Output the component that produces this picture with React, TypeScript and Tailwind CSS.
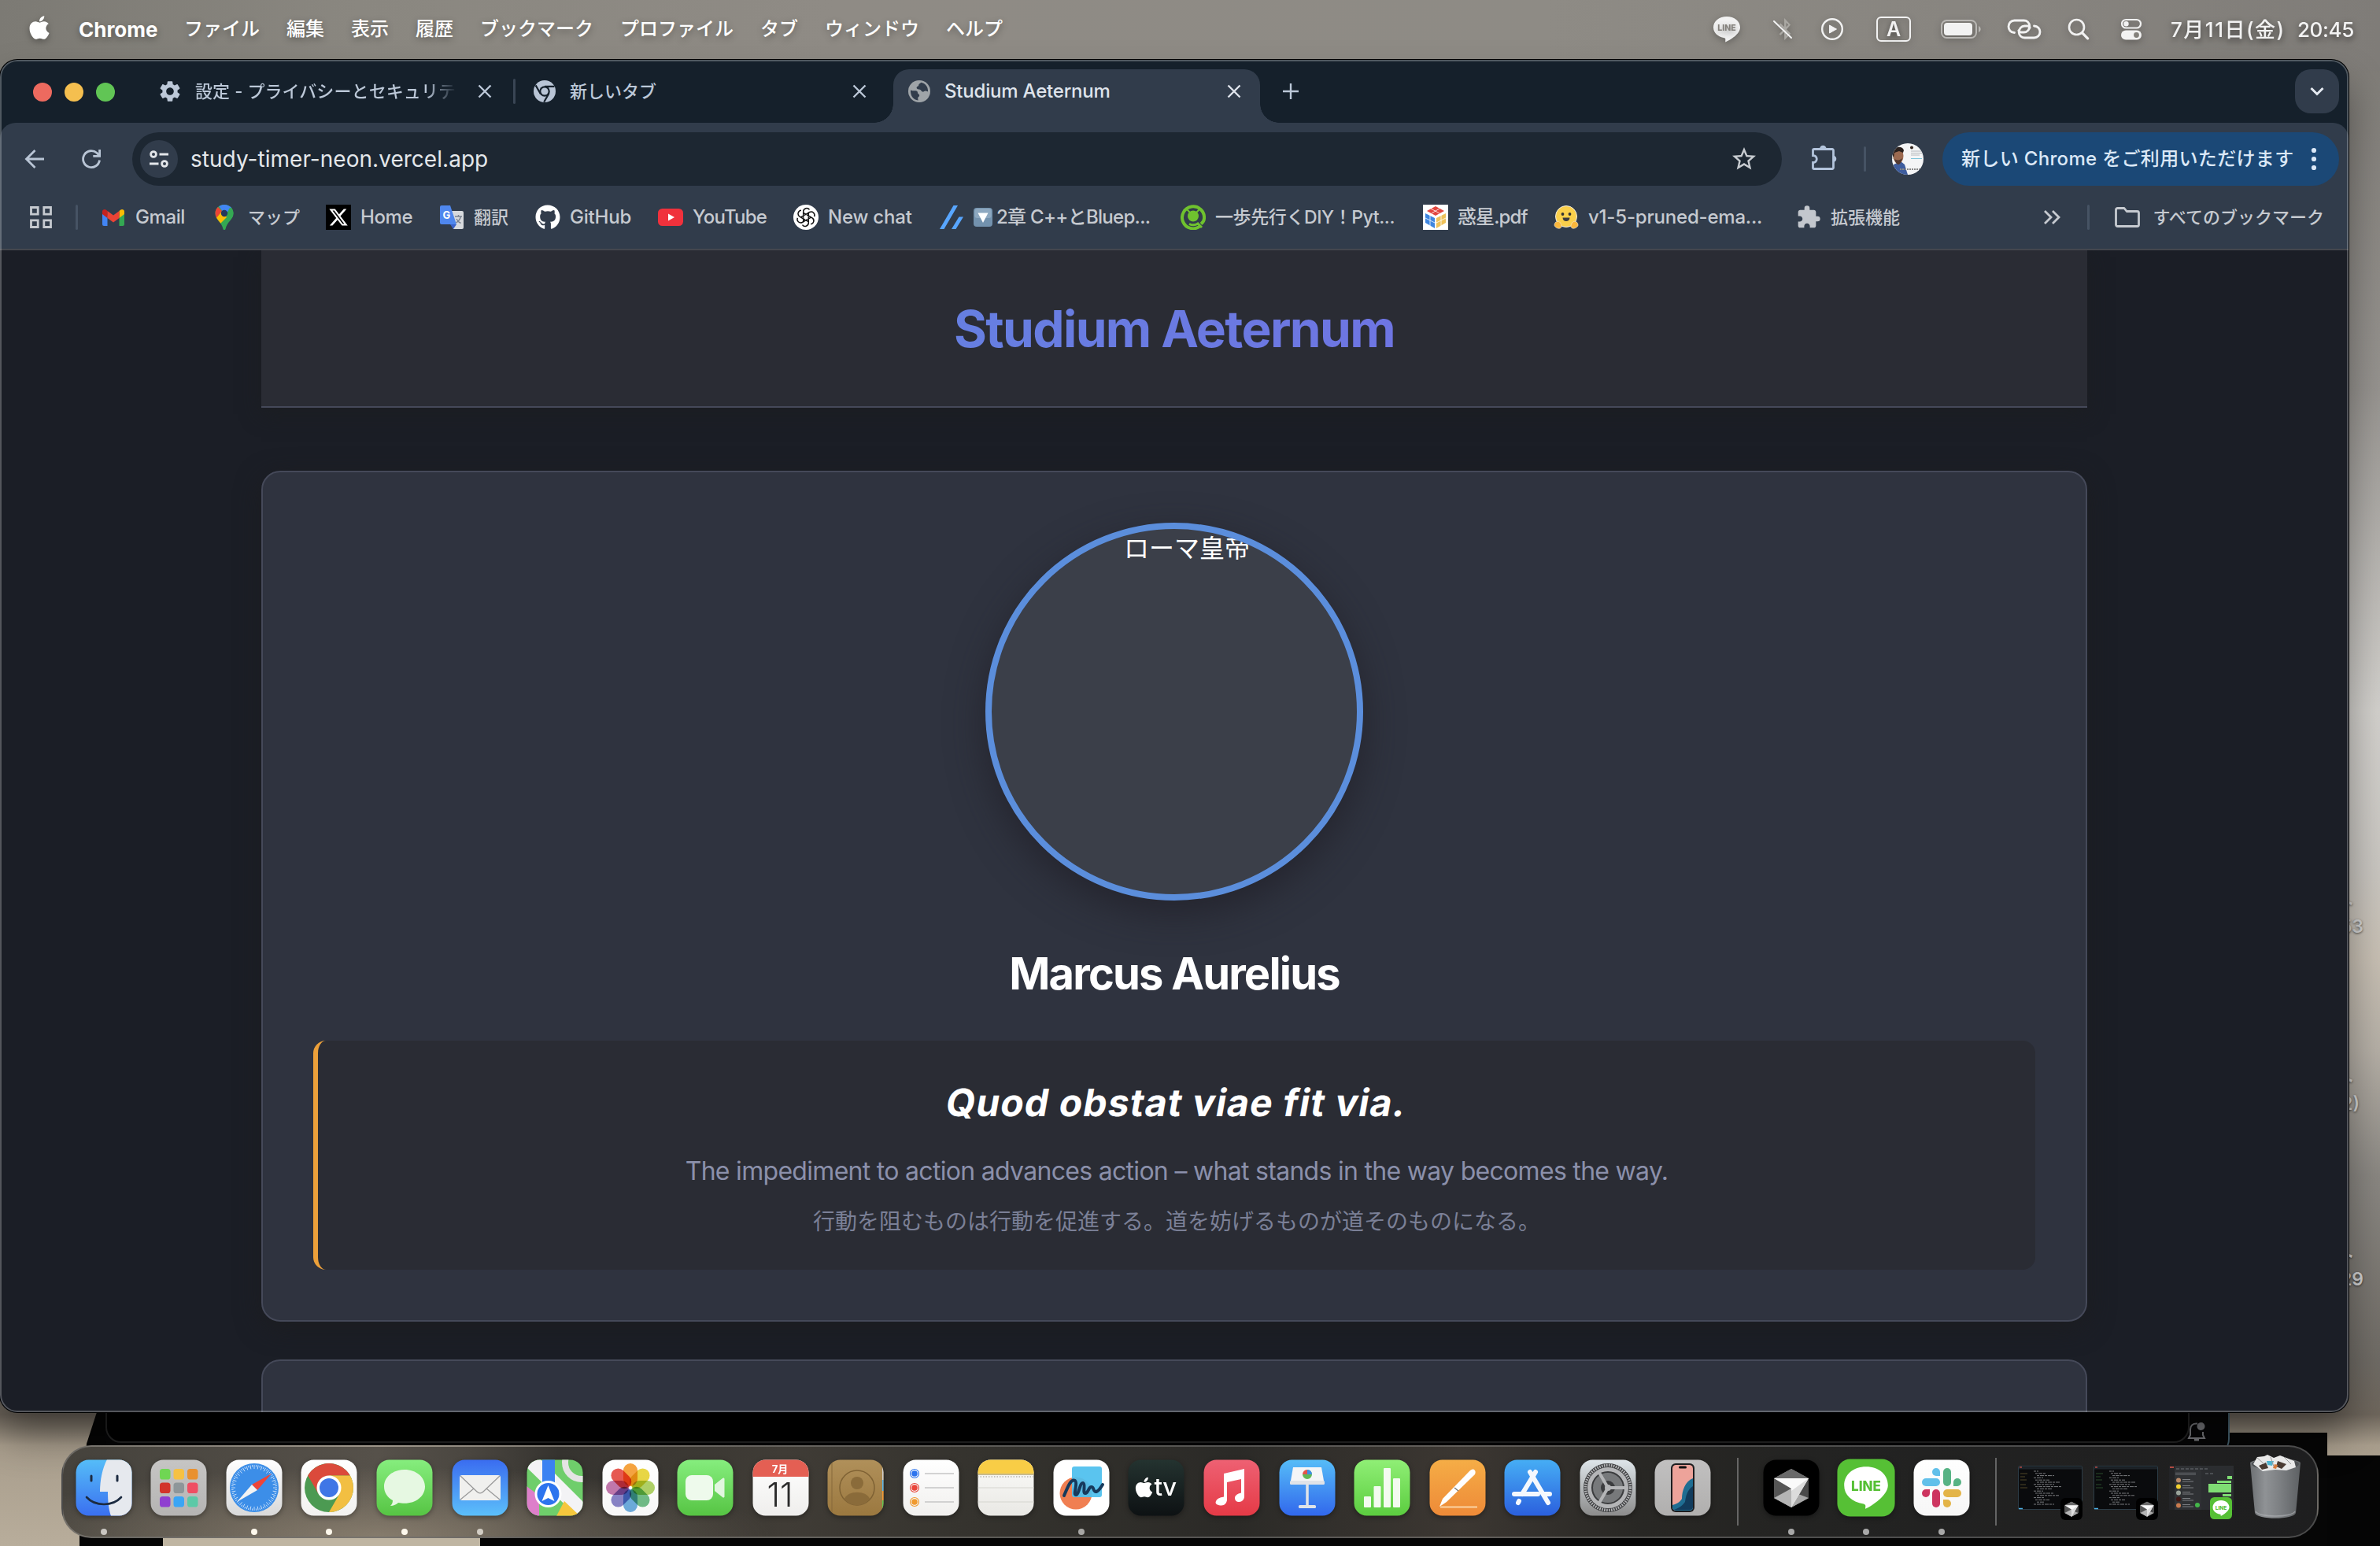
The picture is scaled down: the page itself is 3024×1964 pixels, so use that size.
import React from "react";
import { FaApple, FaGithub, FaXTwitter, FaBluetoothB } from "react-icons/fa6";
import { MdSettings, MdExtension, MdStarOutline } from "react-icons/md";

type Node = React.ReactNode;

/* ---------- small line icons ---------- */

const Close = ({ className = "" }: { className?: string }) => (
  <svg viewBox="0 0 24 24" className={"size-6 shrink-0 " + className} stroke="currentColor" strokeWidth="2.4" fill="none">
    <path d="M4.5 4.5l15 15M19.5 4.5l-15 15" />
  </svg>
);

const ChromeMono = () => (
  <svg viewBox="0 0 28 28" className="size-7 shrink-0">
    <circle cx="14" cy="14" r="14" fill="#b9c5d6" />
    <circle cx="14" cy="14" r="6.8" fill="#15202b" />
    <circle cx="14" cy="14" r="4.6" fill="#b9c5d6" />
    <path d="M14 7.9H26.4M8.7 17L2.6 6.4M19.3 17L13.2 27.6" stroke="#15202b" strokeWidth="2.2" />
  </svg>
);

const Globe = () => (
  <svg viewBox="0 0 28 28" className="size-7 shrink-0">
    <circle cx="14" cy="14" r="14" fill="#9fa4a8" />
    <path
      d="M3 12.5c2 .8 4 1 5.8.8 2.2-.2 3.2.8 3.2 2.4 0 1.8 2 1.6 2.2 3.4.2 2-2.2 2-2 4 .1 1.2.6 2.2.3 2.5C6.5 24.8 2.6 19.8 3 12.5zM16 2.8c-.5 1.6-2.8 1.4-2.8 3.4 0 1.6-2.6 1.4-2.6 3.4 0 1.8 2.4 2 4.2 2.2 1.6.2 1.4 2.4 3.4 2.8 1.8.4 2.6-1.8 4.4-1 1 .5 1.6.8 2.5.6C25.2 8 21.5 3.6 16 2.8z"
      fill="#313c4b"
    />
  </svg>
);

/* ---------- menu bar ---------- */

const MENUS = ["ファイル", "編集", "表示", "履歴", "ブックマーク", "プロファイル", "タブ", "ウィンドウ", "ヘルプ"];

function MenuBar() {
  return (
    <div className="flex h-[74px] items-center text-[24px] font-medium text-white [text-shadow:0_3px_8px_rgba(0,0,0,0.35)]">
      <FaApple className="ml-[33px] mb-1 size-[34px] drop-shadow-[0_3px_4px_rgba(0,0,0,0.3)]" />
      <span className="ml-[33px] w-[102px] text-[26px] font-bold">Chrome</span>
      <div className="ml-8 flex gap-[34px]">
        {MENUS.map((m) => (
          <span key={m} className="whitespace-nowrap">{m}</span>
        ))}
      </div>
      <div className="ml-auto mr-8 flex items-center text-[#f2f2f2] drop-shadow-[0_3px_4px_rgba(0,0,0,0.25)]">
        <svg viewBox="0 0 36 34" className="h-[34px] w-9">
          <path d="M18 1C8.3 1 1 7 1 14.8c0 6.8 5.4 11.900 14 13.400 1.600.3 1.400 1.300 1.200 5.300 6-2.600 18.800-10 18.800-18.700C35 7 27.700 1 18 1z" fill="#f2f2f2" />
          <text x="18" y="18.8" textAnchor="middle" fontSize="10.5" fontWeight="800" fill="#84817c" fontFamily="Inter">LINE</text>
        </svg>
        <div className="relative ml-[40px] size-7">
          <FaBluetoothB className="absolute left-0.5 top-0 size-7 text-[#aaa8a3]" />
          <svg viewBox="0 0 28 28" className="absolute inset-0 size-7" stroke="#f2f2f2" strokeWidth="2" strokeLinecap="round">
            <path d="M2 4l22 21" />
          </svg>
        </div>
        <svg viewBox="0 0 30 30" className="ml-[33px] size-[30px]" fill="none" stroke="#f2f2f2" strokeWidth="2.4">
          <circle cx="15" cy="15" r="12.8" />
          <path d="M11.500 10v10l9-5z" fill="#f2f2f2" strokeWidth="1" strokeLinejoin="round" />
        </svg>
        <div className="ml-[41px] flex h-8 w-11 items-center justify-center rounded-[6px] border-2 border-[#f2f2f2] text-[25px] leading-none font-semibold">A</div>
        <svg viewBox="0 0 52 24" className="ml-[38px] h-6 w-[52px]">
          <rect x="1" y="1" width="44" height="22" rx="6.5" fill="none" stroke="#b9b7b4" strokeWidth="2" />
          <rect x="4" y="4" width="36" height="16" rx="4" fill="#f2f2f2" />
          <path d="M48 8c3.500 1.500 3.500 6.500 0 8z" fill="#b9b7b4" />
        </svg>
        <svg viewBox="0 0 44 26" className="ml-8 h-[26px] w-11" fill="none" stroke="#f2f2f2" strokeWidth="2.8" strokeLinecap="round">
          <path d="M9.500 17.500C5 17.500 2 14 2 9.800 2 5.500 5.200 2 9.500 2h12c4 0 7 3 7.300 7 .2 4.200-2.800 8-7.300 8h-3.300c-1.800 0-3-1-3.400-2.200" />
          <path d="M34.500 9c4.500 0 7.500 3.500 7.500 7.500 0 4.200-3.200 7.500-7.500 7.500h-12c-4 0-7.300-3-7.300-7 0-4.500 3-8 7.300-8h3.300c1.800 0 3 1 3.400 2.200" />
        </svg>
        <svg viewBox="0 0 28 28" className="ml-[33px] size-7" fill="none" stroke="#f2f2f2" strokeWidth="2.6" strokeLinecap="round">
          <circle cx="11.5" cy="11.5" r="9.5" />
          <path d="M18.800 18.800l6.800 7" strokeWidth="3.2" />
        </svg>
        <svg viewBox="0 0 28 28" className="ml-[39px] size-7">
          <rect x="2" y="2" width="24" height="10.5" rx="5.25" fill="none" stroke="#f2f2f2" strokeWidth="2.2" />
          <circle cx="7.5" cy="7.2" r="3.2" fill="#f2f2f2" />
          <rect x="1" y="15.5" width="26" height="12" rx="6" fill="#f2f2f2" />
          <circle cx="20.5" cy="21.5" r="3.4" fill="#84817c" />
        </svg>
        <span className="ml-[36px] w-[161px] whitespace-nowrap text-[26px] tracking-[1.5px]">7月11日(金)</span>
        <span className="w-[73px] whitespace-nowrap text-[26px] tracking-[-0.4px]">20:45</span>
      </div>
    </div>
  );
}

/* ---------- browser chrome ---------- */

function TabStrip() {
  return (
    <div className="flex h-20 items-start pt-3 text-[24px] font-medium text-[#bcc8d8]">
      <div className="ml-[42px] flex h-[58px] items-center gap-4">
        <span className="size-6 rounded-full bg-[#ed6a5f]" />
        <span className="size-6 rounded-full bg-[#f5bf4f]" />
        <span className="size-6 rounded-full bg-[#61c555]" />
      </div>
      <div className="ml-[54px] flex h-14 items-center">
        <MdSettings className="size-8 shrink-0" />
        <span className="ml-[16px] w-[333px] bg-linear-to-r from-[#bcc8d8] from-88% to-[#15202b] to-100% bg-clip-text text-[22px] tracking-[0.1px] whitespace-nowrap text-transparent">
          設定 - プライバシーとセキュリテ
        </span>
        <Close className="ml-[23px]" />
      </div>
      <span className="ml-[24px] mt-3 h-8 w-[3px] rounded bg-[#394554]" />
      <div className="ml-[23px] flex h-14 w-[457px] items-center">
        <ChromeMono />
        <span className="ml-[18px] text-[22px]">新しいタブ</span>
        <Close className="ml-auto mr-[31px]" />
      </div>
      <div className="relative h-[68px] w-[466px] rounded-t-[20px] bg-[#313c4b] before:absolute before:bottom-0 before:-left-6 before:size-6 before:bg-[radial-gradient(circle_at_0_0,transparent_23.5px,#313c4b_24px)] after:absolute after:-right-6 after:bottom-0 after:size-6 after:bg-[radial-gradient(circle_at_100%_0,transparent_23.5px,#313c4b_24px)]">
        <div className="flex h-14 items-center pl-[19px] text-[#dfe4ec]">
          <Globe />
          <span className="ml-[18px] tracking-[-0.2px]">Studium Aeternum</span>
          <Close className="mr-[21px] ml-auto" />
        </div>
      </div>
      <div className="ml-[27px] flex h-14 items-center">
        <svg viewBox="0 0 24 24" className="size-6" stroke="currentColor" strokeWidth="2.4">
          <path d="M12 2v20M2 12h20" />
        </svg>
      </div>
      <div className="mr-3 ml-auto flex size-14 items-center justify-center rounded-[20px] bg-[#313c4b]">
        <svg viewBox="0 0 24 24" className="size-6" fill="none" stroke="#e6ebf2" strokeWidth="3">
          <path d="M4.500 8l7.500 7.500L19.500 8" />
        </svg>
      </div>
    </div>
  );
}

function Avatar() {
  return (
    <svg viewBox="0 0 40 40" className="size-10 shrink-0">
      <defs>
        <clipPath id="avatar">
          <circle cx="20" cy="20" r="20" />
        </clipPath>
      </defs>
      <g clipPath="url(#avatar)">
        <rect width="40" height="40" fill="#f4f5f6" />
        <rect width="8" height="20" fill="#cfcdc9" />
        <path d="M2 40V27l9-4 5 4 4 13z" fill="#3e5d9e" />
        <ellipse cx="8" cy="16" rx="6.5" ry="10" fill="#9c6a50" />
        <path d="M0 14C0 4 13 2 15 9l-1 3-5-2-6 2-1 6z" fill="#2a211e" />
        <path d="M3 20c3 2 7 2 10-1-1 5-3 8-5 8s-4-3-5-7z" fill="#543a30" />
        <circle cx="25" cy="5.5" r="2" fill="#33261f" />
        <path d="M24 10h13M24 12.500h14M24 15h11" stroke="#b5b8bc" />
        <path d="M24 19.500h14" stroke="#7cc4da" />
        <path d="M10 33h26" stroke="#888" strokeWidth="2" strokeDasharray="2 1" />
      </g>
    </svg>
  );
}

function Toolbar() {
  return (
    <div className="flex h-20 items-end text-[#b9c5d5]">
      <div className="flex h-[68px] w-full items-center">
        <svg viewBox="0 0 28 28" className="ml-[30px] size-7" fill="none" stroke="currentColor" strokeWidth="2.8">
          <path d="M26 14H4M14.500 3L3.500 14l11 11" />
        </svg>
        <svg viewBox="0 0 28 28" className="ml-[44px] size-7" fill="none" stroke="currentColor" strokeWidth="2.8">
          <path d="M24.500 15.500A10.500 10.500 0 1 1 21 6.200l3.500 3.500" />
          <path d="M24.600 2v8.300h-8.300" />
        </svg>
        <div className="ml-[38px] flex h-[68px] w-[2096px] items-center rounded-full bg-[#1d2732] pr-[30px] pl-[10px]">
          <div className="flex size-12 items-center justify-center rounded-full bg-[#313c4b]">
            <svg viewBox="0 0 28 28" className="size-7" fill="none" stroke="#e3e6ea" strokeWidth="2.8">
              <circle cx="7" cy="8" r="3.4" />
              <path d="M14.500 8H26M2 20h11.500" />
              <circle cx="21" cy="20" r="3.4" />
            </svg>
          </div>
          <span className="ml-4 text-[28px] tracking-[0.03px] text-[#e4e7eb]">study-timer-neon.vercel.app</span>
          <MdStarOutline className="ml-auto size-9 text-[#c8ccd1]" />
        </div>
        <svg viewBox="0 0 34 34" className="ml-[36px] size-[34px] shrink-0 -translate-y-0.5">
          <path
            d="M5 6.500h23A1.500 1.500 0 0 1 29.500 8v22a1.500 1.500 0 0 1-1.500 1.500H5A1.500 1.500 0 0 1 3.500 30v-6.500c3 0 4.800-2 4.800-4.500s-1.800-4.500-4.800-4.500V8A1.500 1.500 0 0 1 5 6.500z"
            fill="none" stroke="#b3c4dc" strokeWidth="2.8"
          />
          <path d="M12 6a4.300 4.300 0 0 1 8.600 0zM29 14.500a4.300 4.300 0 0 1 0 8.600z" fill="#b3c4dc" />
        </svg>
        <span className="ml-[34px] h-8 w-[3px] rounded bg-[#465364]" />
        <div className="ml-[33px]"><Avatar /></div>
        <div className="ml-6 flex h-[68px] w-[504px] items-center rounded-full bg-[#1b4876] pl-6 text-[24px] font-medium text-[#dbe8f7]">
          <span className="w-[428px] whitespace-nowrap tracking-[0.33px]">新しい Chrome をご利用いただけます</span>
          <svg viewBox="0 0 8 30" className="ml-[16px] h-[30px] w-2" fill="#dbe8f7">
            <circle cx="4" cy="4" r="3.1" />
            <circle cx="4" cy="15" r="3.1" />
            <circle cx="4" cy="26" r="3.1" />
          </svg>
        </div>
      </div>
    </div>
  );
}

/* ---------- bookmarks ---------- */

const Gmail = () => (
  <svg viewBox="0 0 32 32" className="size-8">
    <path d="M2 8v17a2 2 0 0 0 2 2h4.500V14z" fill="#4285f4" />
    <path d="M30 8v17a2 2 0 0 1-2 2h-4.500V14z" fill="#34a853" />
    <path d="M2 8.500V12l6.500 5V8L7 6.700C5 5.200 2 6.300 2 8.500z" fill="#c5221f" />
    <path d="M30 8.500V12l-6.500 5V8L25 6.700c2-1.500 5-.4 5 1.800z" fill="#fbbc04" />
    <path d="M8.500 8v9l7.500 5.600 7.500-5.600V8L16 13.600z" fill="#ea4335" />
  </svg>
);
const MapsPin = () => (
  <svg viewBox="0 0 32 32" className="size-8 -translate-x-0.5">
    <defs>
      <clipPath id="pin">
        <path d="M16 0C9 0 4.500 5 4.500 11c0 8 8 10.500 10 20 .4 1.300 2.600 1.300 3 0 2-9.500 10-12 10-20C27.500 5 23 0 16 0z" />
      </clipPath>
    </defs>
    <g clipPath="url(#pin)">
      <rect width="32" height="32" fill="#34a853" />
      <path d="M8 0h24L16 12z" fill="#4285f4" />
      <path d="M22 5l10-5v10L14 30z" fill="#34a853" />
      <path d="M3 20l10-12 6 8L9 26z" fill="#fbbc04" />
      <path d="M0 4l8-1 5 5-8 10z" fill="#ea4335" />
    </g>
    <circle cx="16" cy="11" r="4.2" fill="#24375c" />
  </svg>
);
const Translate = () => (
  <svg viewBox="0 0 32 32" className="size-8">
    <path d="M12 8h17a2 2 0 0 1 2 2v19a2 2 0 0 1-2 2H18z" fill="#d7dade" />
    <path d="M14 25h8l-4 6z" fill="#3b62c8" />
    <path d="M3 1h11l8 24H3a2 2 0 0 1-2-2V3a2 2 0 0 1 2-2z" fill="#4f87ee" />
    <text x="9.5" y="18" textAnchor="middle" fontSize="13" fontWeight="700" fill="#fff" fontFamily="Inter">G</text>
    <path d="M20 15h9M24.500 13v2M27.500 15c-1 4-3.500 6.500-6 8M22 18c1 2.500 3.500 4.500 5.500 5.500" stroke="#7a8290" strokeWidth="1.4" fill="none" />
  </svg>
);
const XLogo = () => (
  <span className="flex size-8 items-center justify-center bg-black">
    <FaXTwitter className="size-[26px] text-white" />
  </span>
);
const YouTube = () => (
  <svg viewBox="0 0 32 32" className="size-8">
    <rect y="5" width="32" height="22" rx="5.5" fill="#f0313c" />
    <path d="M13 11.500v9l8-4.500z" fill="#fff" />
  </svg>
);
const Knot = () => (
  <svg viewBox="0 0 32 32" className="size-8">
    <circle cx="16" cy="16" r="16" fill="#fff" />
    <g fill="none" stroke="#111" strokeWidth="1.5">
      {[0, 60, 120, 180, 240, 300].map((a) => (
        <path key={a} d="M16 12.200l-3.300-1.900V8.700a4.300 4.300 0 0 1 7.800-2.300M12.700 10v6.800" transform={`rotate(${a} 16 16)`} />
      ))}
    </g>
  </svg>
);
const Zenn = () => (
  <svg viewBox="0 0 32 32" className="size-8" fill="#58a6ff">
    <path d="M1 31h5.500L24 1h-5.500zM16 31h5.500L31 15.500h-5.500z" />
  </svg>
);
const DownBadge = () => (
  <svg viewBox="0 0 24 24" className="mr-[5px] size-6">
    <rect width="24" height="24" rx="4" fill="#7392ae" />
    <rect x="1.5" y="1" width="21" height="12" rx="3" fill="#9fb7cc" opacity=".6" />
    <path d="M5.500 6.500h13L12 19z" fill="#fff" />
  </svg>
);
const Ring = () => (
  <svg viewBox="0 0 32 32" className="size-8">
    <path d="M24.500 27.500A14 14 0 1 1 30 17.500c0 3-1.500 5-4 7" fill="none" stroke="#6fc22e" strokeWidth="4" />
    <circle cx="16" cy="14.5" r="7" fill="#6fc22e" />
    <path d="M8.500 6.500l4 4M23.500 6.500l-4 4" stroke="#6fc22e" strokeWidth="2" />
    <path d="M11 24.500c4 2 8 1.500 11-.5l5 5" stroke="#6fc22e" strokeWidth="3" fill="none" />
  </svg>
);
const Cube = () => (
  <svg viewBox="0 0 32 32" className="size-8">
    <rect width="32" height="32" fill="#fff" />
    <path d="M16 2l11 6-11 6L5 8z" fill="#e2463f" />
    <path d="M3 11l12 6v13L3 23z" fill="#3f86e0" />
    <path d="M29 11l-12 6v13l12-7z" fill="#efc25a" />
    <path d="M10 5l11 6M21 5l-10 6M9 13v14M3 17l12 6M23 13v14M29 17l-12 6" stroke="#fff" strokeWidth="0.8" />
  </svg>
);
const Hug = () => (
  <svg viewBox="0 0 32 32" className="size-8">
    <circle cx="16" cy="15" r="13.5" fill="#fbd04b" stroke="#f3ede0" strokeWidth="1" />
    <circle cx="11.5" cy="12" r="1.9" fill="#333" />
    <circle cx="20.5" cy="12" r="1.9" fill="#333" />
    <path d="M11.500 16.500h9c0 6-9 6-9 0z" fill="#3b3a3f" />
    <path d="M3 22c3-2 5 0 6 2s2 5-1 6-7-2-7-4 1-3.500 2-4zM29 22c-3-2-5 0-6 2s-2 5 1 6 7-2 7-4-1-3.500-2-4z" fill="#fbb73c" stroke="#f3ede0" strokeWidth=".6" />
  </svg>
);

const BOOKMARKS: { icon: Node; label: Node; box: string; text: string }[] = [
  { icon: <Gmail />, label: "Gmail", box: "w-[143px]", text: "ml-3 tracking-[-0.4px]" },
  { icon: <MapsPin />, label: "マップ", box: "w-[143px]", text: "ml-[12px] text-[22px]" },
  { icon: <XLogo />, label: "Home", box: "w-[144px]", text: "ml-3 tracking-[-0.4px]" },
  { icon: <Translate />, label: "翻訳", box: "w-[122px]", text: "ml-3 text-[22px]" },
  { icon: <FaGithub className="size-8 text-white" />, label: "GitHub", box: "w-[156px]", text: "ml-3 tracking-[-0.2px]" },
  { icon: <YouTube />, label: "YouTube", box: "w-[172px]", text: "ml-3 tracking-[-0.8px]" },
  { icon: <Knot />, label: "New chat", box: "w-[185px]", text: "ml-3 tracking-[-0.2px]" },
  { icon: <Zenn />, label: <><DownBadge />2章 C++とBluep...</>, box: "w-[307px]", text: "ml-3 tracking-[-0.7px]" },
  { icon: <Ring />, label: "一歩先行くDIY！Pyt...", box: "w-[308px]", text: "ml-3 text-[23px] tracking-[-0.4px]" },
  { icon: <Cube />, label: "惑星.pdf", box: "w-[166px]", text: "ml-3 tracking-[-0.9px]" },
  { icon: <Hug />, label: "v1-5-pruned-ema...", box: "w-[308px]", text: "ml-3 tracking-[-0.2px]" },
  { icon: <MdExtension className="size-8 text-[#c3c7cd]" />, label: "拡張機能", box: "w-[140px]", text: "ml-3 text-[22px]" },
];

function BookmarksBar() {
  return (
    <div className="flex h-20 items-center text-[24px] font-medium text-[#c6cad0]">
      <svg viewBox="0 0 28 28" className="ml-[38px] size-7 shrink-0" fill="none" stroke="currentColor" strokeWidth="2.8">
        <path d="M1.500 1.500h8.700v8.700H1.500zM17.800 1.500h8.700v8.700h-8.700zM1.500 17.800h8.700v8.700H1.500zM17.800 17.800h8.700v8.700h-8.700z" />
      </svg>
      <span className="ml-[30px] h-8 w-[3px] shrink-0 rounded bg-[#465364]" />
      <div className="ml-[29px] flex">
        {BOOKMARKS.map((b, i) => (
          <div key={i} className={"flex shrink-0 items-center whitespace-nowrap " + b.box}>
            {b.icon}
            <span className={"flex items-center " + b.text}>{b.label}</span>
          </div>
        ))}
      </div>
      <div className="mr-[31px] ml-auto flex items-center">
        <svg viewBox="0 0 22 20" className="h-5 w-[22px]" fill="none" stroke="currentColor" strokeWidth="2.8">
          <path d="M2 2l8 8-8 8M12 2l8 8-8 8" />
        </svg>
        <span className="ml-[34px] h-8 w-[3px] rounded bg-[#465364]" />
        <svg viewBox="0 0 32 26" className="ml-[32px] h-[26px] w-8" fill="none" stroke="currentColor" strokeWidth="2.8" strokeLinejoin="round">
          <path d="M1.500 3.500a2 2 0 0 1 2-2H12l3.200 4h13.300a2 2 0 0 1 2 2v15a2 2 0 0 1-2 2h-25a2 2 0 0 1-2-2z" />
        </svg>
        <span className="ml-4 text-[22px]">すべてのブックマーク</span>
      </div>
    </div>
  );
}

/* ---------- web page ---------- */

function Page() {
  return (
    <div className="h-[1476px] overflow-hidden bg-[#1b1e26]">
      <div className="mx-auto w-[2320px]">
        <header className="h-[200px] border-b-2 border-[#454959] bg-[#2a2c34] pt-[62px] text-center shadow-[0_8px_24px_rgba(28,30,33,0.9)]">
          <h1 className="text-[64px] leading-[76px] font-bold tracking-[-1.65px]">
            <span className="bg-linear-to-r from-[#667fe1] to-[#6e75e2] bg-clip-text text-transparent">Studium Aeternum</span>
          </h1>
        </header>
        <section className="mt-20 flex flex-col items-center rounded-[24px] border-2 border-[#454959] bg-[#2f333f] p-16 shadow-[0_8px_32px_rgba(28,29,32,1)]">
          <div className="flex size-[480px] justify-center overflow-hidden rounded-full border-8 border-[#5b8edc] bg-[#3b3f49] shadow-[0_16px_48px_rgba(32,30,38,0.7)]">
            <span className="ml-8 h-[50px] whitespace-nowrap text-[32px] leading-[50px] text-white">ローマ皇帝</span>
          </div>
          <h2 className="mt-[59px] text-[56px] leading-[68px] font-bold tracking-[-1.8px] text-white">Marcus Aurelius</h2>
          <div className="mt-[51px] h-[291px] w-full rounded-[16px] border-l-[6px] border-[#eca03a] bg-[#2a2c34] pt-[46px] text-center">
            <p className="-skew-x-[10deg] text-[48px] leading-[66px] font-bold tracking-[1.15px] text-white">Quod obstat viae fit via.</p>
            <p className="mt-[28px] text-[32px] leading-[52px] tracking-[-0.7px] text-[#8b90ab]">
              The impediment to action advances action – what stands in the way becomes the way.
            </p>
            <p className="mt-[14px] text-[28px] leading-[48px] text-[#7b8097]">行動を阻むものは行動を促進する。道を妨げるものが道そのものになる。</p>
          </div>
        </section>
        <section className="mt-12 h-[200px] rounded-t-[24px] border-2 border-[#454959] bg-[#2f333f]" />
      </div>
    </div>
  );
}

/* ---------- dock ---------- */

function Tile({ id, from, to, children }: { id: string; from: string; to: string; children?: Node }) {
  return (
    <svg viewBox="0 0 72 72" className="size-[72px]">
      <defs>
        <linearGradient id={"g-" + id} x1="0" y1="0" x2="0" y2="1">
          <stop offset="0" stopColor={from} />
          <stop offset="1" stopColor={to} />
        </linearGradient>
        <clipPath id={"c-" + id}>
          <rect x=".5" y=".5" width="71" height="71" rx="16" />
        </clipPath>
      </defs>
      <g clipPath={`url(#c-${id})`}>
        <rect width="72" height="72" fill={`url(#g-${id})`} />
        {children}
      </g>
    </svg>
  );
}

const CursorMark = () => (
  <g>
    <path d="M36 12L58 24v25L36 61 14 49V24z" fill="#8d8d8d" />
    <path d="M36 12L14 24h44z" fill="#6a6a6a" />
    <path d="M14 24l22 13v24L14 49z" fill="#555" />
    <path d="M14 49l22-12v24z" fill="#b5b5b5" />
    <path d="M58 24v25L36 61z" fill="#4a4a4a" />
    <path d="M58 49L45 44 36 61z" fill="#a8a8a8" />
    <path d="M14 24h44L36 61V37z" fill="#fafafa" />
    <path d="M58 24L36 61V40z" fill="#dcdcdc" />
  </g>
);

const LineMark = ({ fill = "#fff" }: { fill?: string }) => (
  <g>
    <path d="M36 10C20 10 9 20 9 33c0 12 9 20 24 23 3 1 2.500 3 2 6 9-4 28-17 28-29C63 20 52 10 36 10z" fill={fill} />
    <text x="36" y="40" textAnchor="middle" fontSize="16.5" fontWeight="800" fill="#56c035" fontFamily="Inter">LINE</text>
  </g>
);

const PETALS: [number, string][] = [
  [0, "#f59a2b"], [45, "#e8d430"], [90, "#a9cf57"], [135, "#63b77c"],
  [180, "#5fa5dc"], [225, "#7d78c3"], [270, "#bd6aa5"], [315, "#e6493f"],
];

const PAD = ["#6fd653", "#f6c143", "#e9912f", "#d2342b", "#8e9699", "#ef4f63", "#8f3fd0", "#3aa5f5", "#5cc9a7"];

const TICKS = Array.from({ length: 72 }, (_, i) => i * 5);

const APPS: { node: Node; dot?: string }[] = [
  {
    dot: "bg-[#c9c6c1]",
    node: (
      <Tile id="finder" from="#55bdf8" to="#3a6ff0">
        <path d="M40 0c-6 12-9 26-9 41h10c0 12 1 22 4 31h27V0z" fill="#e6e9ee" />
        <path d="M20 21v6M53 21v6" stroke="#1c2b40" strokeWidth="3" strokeLinecap="round" />
        <path d="M14 48c11 12 33 12 44 0" stroke="#1c2b40" strokeWidth="2.6" fill="none" strokeLinecap="round" />
      </Tile>
    ),
  },
  {
    node: (
      <Tile id="pad" from="#c6c5c4" to="#b5b4b3">
        {PAD.map((c, i) => (
          <rect key={i} x={12 + (i % 3) * 17.5} y={12 + Math.floor(i / 3) * 17.5} width="13.5" height="13.5" rx="3.6" fill={c} />
        ))}
      </Tile>
    ),
  },
  {
    dot: "bg-[#fdf8ec]",
    node: (
      <Tile id="safari" from="#ffffff" to="#d8d8d8">
        <circle cx="36" cy="36" r="31" fill="#3c8ee8" />
        {TICKS.map((a) => (
          <path key={a} d={a % 10 ? "M36 7v2.500" : "M36 7v5"} stroke="#dcebfb" strokeWidth="0.8" transform={`rotate(${a} 36 36)`} />
        ))}
        <path d="M58 18L33 32l7 7z" fill="#ee4438" />
        <path d="M14 54l19-22 7 7z" fill="#f3f3f3" />
      </Tile>
    ),
  },
  {
    dot: "bg-[#fdf8ec]",
    node: (
      <Tile id="chrome" from="#ffffff" to="#f2f1ef">
        <circle cx="36" cy="36" r="31" fill="#4c9a52" />
        <path d="M9.200 20.500A31 31 0 0 1 62.800 20.500H36L22.600 43.700z" fill="#db4a3b" />
        <path d="M62.800 20.500A31 31 0 0 1 36 67l13.400-23.300L49.400 28 36 20.500z" fill="#f2bf42" />
        <circle cx="36" cy="36" r="15.5" fill="#fff" />
        <circle cx="36" cy="36" r="12" fill="#3f76e6" />
      </Tile>
    ),
  },
  {
    dot: "bg-[#fdf8ec]",
    node: (
      <Tile id="msg" from="#86ee7e" to="#56c443">
        <path d="M36 13c-15 0-26 9.500-26 21.500 0 7.500 4 13.500 11 17.500 0 3-1 5-3 7 4 0 8-2 10-4 2.500.5 5 .8 8 .8 15 0 26-9.500 26-21.300S51 13 36 13z" fill="#e6f8e2" />
      </Tile>
    ),
  },
  {
    dot: "bg-[#d2cdc4]",
    node: (
      <Tile id="mail" from="#3a6cf0" to="#5cc0fa">
        <rect x="10" y="20" width="52" height="32" rx="3" fill="#f0f0ee" />
        <path d="M11 21l21 20c2.500 2.300 5.500 2.300 8 0l21-20M11 51l17-14M61 51L44 37" fill="none" stroke="#9a9a9a" strokeWidth="1.3" />
      </Tile>
    ),
  },
  {
    node: (
      <Tile id="maps" from="#6fce6b" to="#6fce6b">
        <circle cx="70" cy="4" r="21" fill="none" stroke="#e4e4e4" strokeWidth="8" />
        <path d="M-2 8L74 82v-26L16-2z" fill="#f3f3f5" />
        <path d="M0 34v38h16V46z" fill="#dd7fca" />
        <path d="M38 72h30L48 53z" fill="#f5c73d" />
        <path d="M20 0h16v40H20z" fill="#3b82f2" />
        <circle cx="27.5" cy="44" r="17" fill="#fff" />
        <circle cx="27.5" cy="44" r="14" fill="#2d74ee" />
        <path d="M27.500 33l8 20-8-4-8 4z" fill="#fff" />
      </Tile>
    ),
  },
  {
    node: (
      <Tile id="photos" from="#ffffff" to="#f7f7f7">
        {PETALS.map(([a, c]) => (
          <rect key={a} x="27" y="5" width="18" height="29" rx="9" fill={c} className="mix-blend-multiply" opacity=".9" transform={`rotate(${a} 36 36)`} />
        ))}
      </Tile>
    ),
  },
  {
    node: (
      <Tile id="ft" from="#86ee7e" to="#56c443">
        <rect x="11" y="20" width="35" height="32" rx="8" fill="#eefaec" />
        <path d="M48 32l10-8c1.500-1 2.500-.5 2.500 1v22c0 1.500-1 2-2.500 1l-10-8z" fill="#e2f6df" />
      </Tile>
    ),
  },
  {
    node: (
      <Tile id="cal" from="#ffffff" to="#efeeec">
        <rect width="72" height="22" fill="#e45f53" />
        <text x="35" y="17" textAnchor="middle" fontSize="13" fontWeight="700" fill="#fff" fontFamily="Inter, 'Noto Sans CJK JP'">7月</text>
        <text x="35" y="60" textAnchor="middle" fontSize="42" fontWeight="300" fill="#2b2b2b" fontFamily="Inter">11</text>
      </Tile>
    ),
  },
  {
    node: (
      <Tile id="contacts" from="#b0905a" to="#9b783f">
        <path d="M70 10h2v16h-2z" fill="#cfcfcf" />
        <path d="M70 26h2v14h-2z" fill="#58b6ef" />
        <path d="M70 40h2v12h-2z" fill="#f19a37" />
        <path d="M70 52h2v14h-2z" fill="#62c554" />
        <path d="M6 0v72" stroke="#86683a" strokeWidth="1" />
        <circle cx="38" cy="36" r="22" fill="none" stroke="#7f6234" strokeWidth="1.5" />
        <circle cx="38" cy="30" r="8" fill="#8a6b3a" />
        <path d="M22 50c4-11 28-11 32 0-7 11-25 11-32 0z" fill="#8a6b3a" />
      </Tile>
    ),
  },
  {
    node: (
      <Tile id="rem" from="#ffffff" to="#f1f0ee">
        {[["#2d74ee", 18], ["#e9453a", 36], ["#f09a2e", 54]].map(([c, y]) => (
          <g key={c}>
            <circle cx="15" cy={y} r="5.5" fill="none" stroke={c as string} strokeWidth="1.2" />
            <circle cx="15" cy={y} r="3.8" fill={c as string} />
            <path d={`M28 ${y}h37`} stroke="#c6c6c6" strokeWidth="1.4" />
          </g>
        ))}
      </Tile>
    ),
  },
  {
    node: (
      <Tile id="notes" from="#fbfbf9" to="#e9e8e4">
        <rect width="72" height="18" fill="#f8cd46" />
        <path d="M0 19h72" stroke="#b9a668" strokeWidth="1.5" />
        <path d="M0 22h72" stroke="#b7b5af" strokeWidth="1.5" strokeDasharray="1.5 2" />
        <path d="M0 36h72M0 54h72" stroke="#d6d5d0" strokeWidth="1.2" />
      </Tile>
    ),
  },
  {
    dot: "bg-[#a8a7a5]",
    node: (
      <Tile id="free" from="#ffffff" to="#ffffff">
        <circle cx="29" cy="43" r="20.5" fill="#f07f52" />
        <rect x="24" y="9" width="38" height="39" rx="3" fill="#4ec0ee" opacity=".93" />
        <path d="M14 46c5-12 9-22 14-19 4 3-3 18 1 18s5-16 9-15-1 13 3 13 4-9 8-8c3 0 2 7 6 6 3-1 5-4 8-9" fill="none" stroke="#173a5c" strokeWidth="4" strokeLinecap="round" />
      </Tile>
    ),
  },
  {
    node: (
      <Tile id="tv" from="#243330" to="#0d1113">
        <FaApple x="6" y="21" size={29} color="#fff" />
        <text x="47.5" y="46" textAnchor="middle" fontSize="31" fontWeight="500" letterSpacing="-.5" fill="#fff" fontFamily="Inter">tv</text>
      </Tile>
    ),
  },
  {
    node: (
      <Tile id="music" from="#ee6173" to="#e53a46">
        <path d="M26 18l26-6v35c0 4-3 7-6.500 7S40 52 40 49s3-5.500 8-6.500V25l-18 4v22c0 4-3 7.500-7 7.500S14 57 16 53c1.500-3 4-4.500 10-5.500z" fill="#fff" />
      </Tile>
    ),
  },
  {
    node: (
      <Tile id="key" from="#56bdf8" to="#3167ec">
        <path d="M18 10h36l3 17H15z" fill="#f4f5f7" />
        <rect x="14" y="27" width="44" height="5" rx="1.5" fill="#dfe3e8" />
        <path d="M36 13a6 6 0 1 1-6 6h6z" fill="#62b857" />
        <path d="M36 13a6 6 0 0 1 6 6h-6z" fill="#3c8ee8" />
        <path d="M36 13a6 6 0 0 0-6 6h6z" fill="#e4554b" />
        <path d="M36 32v27" stroke="#dfe3e8" strokeWidth="3.5" />
        <rect x="25" y="58" width="22" height="4" rx="1.5" fill="#dfe3e8" />
      </Tile>
    ),
  },
  {
    node: (
      <Tile id="num" from="#90ef76" to="#5bcd3f">
        <rect x="13" y="47" width="9" height="14" rx="1" fill="#f3fbf0" />
        <rect x="25.5" y="34" width="9" height="27" rx="1" fill="#f3fbf0" />
        <rect x="38" y="11" width="9" height="50" rx="1" fill="#f3fbf0" />
        <rect x="50" y="24" width="9" height="37" rx="1" fill="#f3fbf0" />
      </Tile>
    ),
  },
  {
    node: (
      <Tile id="pages" from="#f5ad46" to="#ee8a38">
        <path d="M14 60.500h47" stroke="#fbd3a3" strokeWidth="2" />
        <path d="M57 13c2 1.500 2 3.500 1 6L22 54l-9 6 4-10L51 15c2-2 4-3 6-2z" fill="#fff" />
        <path d="M32 36l5 4" stroke="#777" strokeWidth="1.5" />
      </Tile>
    ),
  },
  {
    node: (
      <Tile id="store" from="#46aef5" to="#2b5fdd">
        <g stroke="#f4f8fd" strokeWidth="6" strokeLinecap="round" fill="none">
          <path d="M40 16L23 44M33 16l23 39M13 44h30M52 44h6M18 55l1-2" />
        </g>
      </Tile>
    ),
  },
  {
    node: (
      <Tile id="set" from="#dfe6ea" to="#8b8b8b">
        <circle cx="36" cy="36" r="31" fill="#3b3c3e" />
        <circle cx="36" cy="36" r="28.5" fill="none" stroke="#b4b5b7" strokeWidth="3.5" strokeDasharray="1.6 1.4" />
        <circle cx="36" cy="36" r="23.5" fill="none" stroke="#b4b5b7" strokeWidth="5" />
        <circle cx="36" cy="36" r="14" fill="none" stroke="#77797b" strokeWidth="10" />
        <circle cx="36" cy="36" r="4" fill="#b4b5b7" />
        {[0, 120, 240].map((a) => (
          <path key={a} d="M36 36h23" stroke="#b4b5b7" strokeWidth="4" transform={`rotate(${a} 36 36)`} />
        ))}
      </Tile>
    ),
  },
  {
    node: (
      <Tile id="iphone" from="#c1c0c0" to="#b0afae">
        <rect x="21" y="5" width="30" height="62" rx="6" fill="#1d1d1f" />
        <rect x="23" y="7" width="26" height="58" rx="4.5" fill="#eda39a" />
        <path d="M49 24c-10 4-14 16-14 26-3 5-8 7-12 8v3a4.500 4.500 0 0 0 4.500 4H45a4 4 0 0 0 4-4z" fill="#1f6d92" />
        <path d="M49 34c-8 5-9 14-10 20-4 6-9 8-14 10h20a4 4 0 0 0 4-4z" fill="#123c5d" />
        <rect x="31" y="8.5" width="10" height="3" rx="1.5" fill="#111" />
      </Tile>
    ),
  },
];

const THIRD_PARTY: { node: Node }[] = [
  { node: <Tile id="cursor" from="#000000" to="#000000"><CursorMark /></Tile> },
  {
    node: (
      <div className="scale-[1.03]">
        <Tile id="line" from="#56c035" to="#56c035"><LineMark /></Tile>
      </div>
    ),
  },
  {
    node: (
      <Tile id="slack" from="#ffffff" to="#f6f6f6">
        <g transform="translate(36 36)">
          {[["#62c0ea", 0], ["#57b384", 90], ["#e3b448", 180], ["#cd3560", 270]].map(([c, a]) => (
            <g key={c} transform={`rotate(${a})`} fill={c as string}>
              <rect x="-25" y="-12" width="23" height="10" rx="5" />
              <path d="M-2-15h-5a5 5 0 1 1 5-5z" />
            </g>
          ))}
        </g>
      </Tile>
    ),
  },
];

const CODE = [6, 14, 22, 12, 18, 30, 26, 34, 20, 12, 24, 28, 14, 18, 10, 26];

function CodeThumb({ lead }: { lead: string }) {
  return (
    <div className="relative h-[76px] w-[82px]">
      <svg viewBox="0 0 82 56" className="h-14 w-[82px]">
        <rect x=".5" y=".5" width="81" height="55" rx="1.5" fill="#0a0b0d" stroke="#2c3c46" />
        <path d="M1 3h80" stroke="#1d2328" strokeWidth="3" />
        <path d="M2 2h3" stroke="#d9534a" strokeWidth="1.2" />
        <path d="M3 10h9M3 14h6M3 18h8M3 24h7M3 28h9" stroke={lead} strokeWidth="1" opacity=".4" />
        {CODE.map((w, i) => (
          <path key={i} d={`M${20 + (i % 3) * 2} ${7 + i * 2.8}h${w}`} stroke="#9d9fa3" strokeWidth="1" strokeDasharray="3 1 5 1" opacity=".75" />
        ))}
        <path d="M1 54.500h5" stroke="#4db3e8" strokeWidth="1.5" />
      </svg>
      <svg viewBox="0 0 72 72" className="absolute top-[41px] left-[54px] size-7">
        <rect width="72" height="72" rx="16" fill="#000" />
        <CursorMark />
      </svg>
    </div>
  );
}

function ChatThumb() {
  return (
    <div className="relative h-[76px] w-[82px]">
      <svg viewBox="0 0 82 56" className="h-14 w-[82px]">
        <rect width="82" height="56" rx="1.5" fill="#2f3134" />
        <rect width="7" height="56" fill="#232427" />
        <rect x="41" width="41" height="56" fill="#2b2d30" />
        <path d="M1 2h5" stroke="#e0574d" strokeWidth="1.5" />
        <path d="M9 4h40M46 10h12" stroke="#6d7074" strokeDasharray="4 2" />
        <rect x="8" y="8.5" width="26" height="3.5" fill="#4c4f53" />
        {["#b98a6a", "#f1cf2f", "#9aa39a", "#3d1715", "#c97a4e"].map((c, i) => (
          <g key={i}>
            <circle cx="12" cy={18.5 + i * 8} r="3" fill={c} />
            <path d={`M17 ${17.5 + i * 8}h10M17 ${20 + i * 8}h14`} stroke="#84878b" strokeWidth=".9" />
          </g>
        ))}
        <path d="M74 13h6v4h-6zM61 19h18v3H61zM50 23h29v11H50zM68 36h11v3H68z" fill="#7fdd73" />
        <circle cx="36" cy="50" r="3" fill="#43b649" />
      </svg>
      <svg viewBox="0 0 72 72" className="absolute top-[40px] left-[52px] size-7">
        <rect width="72" height="72" rx="14" fill="#56c035" />
        <LineMark />
      </svg>
    </div>
  );
}

function Trash() {
  return (
    <svg viewBox="0 0 66 84" className="h-[84px] w-[66px]">
      <defs>
        <linearGradient id="can" x1="0" x2="1">
          <stop offset="0" stopColor="#6d7073" />
          <stop offset=".3" stopColor="#8f9295" />
          <stop offset=".6" stopColor="#7c7f82" />
          <stop offset="1" stopColor="#5d6063" />
        </linearGradient>
      </defs>
      <path d="M1 10c8-7 56-7 64 0l-6 64c-2 9-50 9-52 0z" fill="url(#can)" />
      <ellipse cx="33" cy="12" rx="30" ry="7" fill="#4c4f52" />
      <path d="M5 12l5-9 9-1 4-2 8 4 8-3 8 3 10 4 2 8-12 4-14-1-16 2z" fill="#e9e9e9" />
      <path d="M12 14l9-4 3 7-8 2zM36 8l11 4-6 6-7-3z" fill="#4a3b33" />
      <path d="M22 8l9 0-2 6-6-1z" fill="#4fb3cf" />
      <path d="M32 12l4 1-2 5-4-1z" fill="#d77b3b" />
      <path d="M10 4l9 8M44 3l9 9M27 3l4 12" stroke="#9a9a9a" strokeWidth="1" />
      <path d="M8 72c4 8 46 8 50 0" fill="none" stroke="#b3b6b9" strokeWidth="1.5" opacity=".6" />
    </svg>
  );
}

function DockItem({ node, dot }: { node: Node; dot?: string }) {
  return (
    <div className="flex w-[95.55px] shrink-0 flex-col items-center pt-4">
      <div className="drop-shadow-[0_2px_3px_rgba(0,0,0,0.35)]">{node}</div>
      {dot && <span className={"mt-4 size-2 rounded-full " + dot} />}
    </div>
  );
}

function Dock() {
  return (
    <div className="absolute top-[1836px] left-[78px] flex h-[118px] w-[2868px] items-start rounded-[38px] border-2 border-white/20 bg-[radial-gradient(ellipse_500px_90px_at_400px_115px,rgba(150,138,120,0.75),transparent),linear-gradient(to_right,#45423c,#56514a_14%,#4a4640_18%,#35332f_22%,#403c36_32%,#35332e_40%,#2b2a27_52%,#3c3732_62%,#282724_70%,#232322_78%,#1e1e1f)] pl-1">
      {APPS.map((a, i) => (
        <DockItem key={i} node={a.node} dot={a.dot} />
      ))}
      <span className="mt-[14px] mr-[19px] ml-[21px] h-[86px] w-0.5 shrink-0 bg-white/30" />
      {THIRD_PARTY.map((a, i) => (
        <DockItem key={i} node={a.node} dot="bg-[#a8a8a8]" />
      ))}
      <span className="mt-[14px] ml-5 h-[86px] w-0.5 shrink-0 bg-white/30" />
      <div className="mt-6 ml-[27px] flex gap-[14px]">
        <CodeThumb lead="#b9a14e" />
        <CodeThumb lead="#5fae5b" />
        <ChatThumb />
      </div>
      <div className="mt-[10px] ml-[20px]"><Trash /></div>
    </div>
  );
}

/* ---------- desktop ---------- */

const FILES = [
  { top: "top-[1132px]", name: "ト", tail: "53" },
  { top: "top-[1357px]", name: "ト", tail: "2)" },
  { top: "top-[1580px]", name: "ト", tail: "29" },
];

export default function App() {
  return (
    <div className="relative h-[1964px] w-[3024px] overflow-hidden bg-[linear-gradient(to_bottom,#85827d,#7f7c77_4%,#96938f_25%,#d3d1cd_46%,#c9c6c1_56%,#c7bfb3_62%,#b5afa6_68%,#8a8782_76%,#6f6b65_88%,#6e665c_91.5%,#a89d8c_93.5%,#b8ad9b)] font-['Inter','Noto_Sans_CJK_JP',sans-serif]">
      <div className="absolute inset-x-0 top-0 h-[90px] bg-[linear-gradient(to_right,#7c7a74,#8a8780_15%,#8f8b85_35%,#8e8b85_65%,#87847f_85%,#7f7c78)]">
        <MenuBar />
      </div>

      {/* dark shelf along the bottom of the wallpaper */}
      <div className="absolute top-[1794px] left-[101px] h-[170px] w-[2731px] bg-[#050505] [clip-path:polygon(22px_0,100%_0,100%_100%,0_100%,0_150px,9px_40px)]" />
      <div className="absolute top-[1820px] left-[2832px] h-[144px] w-[125px] bg-[#060606]" />
      <div className="absolute top-[1849px] left-[2957px] h-[115px] w-[67px] bg-[#050505]" />
      <div className="absolute top-[1950px] left-[207px] h-[14px] w-[403px] bg-[#bfb5a2]" />

      {FILES.map((f) => (
        <div key={f.tail} className={"absolute left-[2900px] w-[103px] text-right text-[23px] leading-[30px] font-semibold text-[#d2d2d2] [text-shadow:0_1px_3px_rgba(0,0,0,0.6)] " + f.top}>
          <div className="pr-[11px]">{f.name}</div>
          <div className={f.tail === "2)" ? "pr-[5px]" : ""}>{f.tail}</div>
        </div>
      ))}

      {/* windows behind the browser */}
      <div className="absolute top-[1700px] left-[134px] h-[148px] w-[2699px] rounded-[20px] border-r-2 border-[#45606e] bg-[#060607]" />
      <div className="absolute top-[1700px] left-[134px] h-[133px] w-[2648px] rounded-[20px] border-2 border-[#232323] bg-black" />
      <svg viewBox="0 0 24 26" className="absolute top-[1806px] left-[2779px] h-[26px] w-6" fill="none" stroke="#77787c" strokeWidth="2">
        <path d="M13 2.500C7 2 4 5 4 10v7l-2 4h20l-2-4v-4" />
        <circle cx="17.5" cy="6" r="5" fill="#77787c" stroke="none" />
        <path d="M9 23h6" strokeWidth="3" />
      </svg>

      {/* browser window */}
      <div className="absolute top-[76px] left-0 h-[1718px] w-[2984px] overflow-hidden rounded-[22px] bg-[#15202b] shadow-[0_0_0_1px_#000,0_30px_50px_rgba(0,0,0,0.4)]">
        <TabStrip />
        <div className="rounded-t-[20px] border-b-2 border-[#44474e] bg-[#313c4b]">
          <Toolbar />
          <BookmarksBar />
        </div>
        <Page />
        <div className="pointer-events-none absolute inset-0 rounded-[22px] border-2 border-white/25" />
      </div>

      <Dock />
    </div>
  );
}
